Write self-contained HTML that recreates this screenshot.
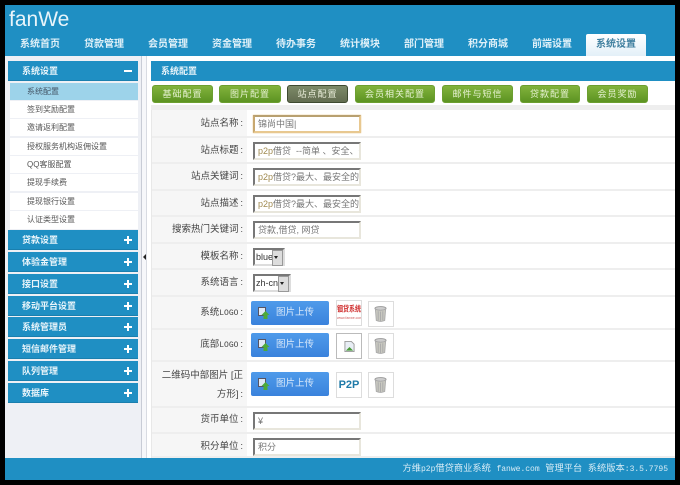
<!DOCTYPE html>
<html><head><meta charset="utf-8">
<style>
html,body{margin:0;padding:0;width:680px;height:485px;overflow:hidden;background:#000;font-family:"Liberation Sans","WenQuanYi Zen Hei","Noto Sans CJK SC",sans-serif}
div,span{position:absolute;box-sizing:border-box;white-space:nowrap}
span.s{position:static}
#p{left:5px;top:5px;width:670px;height:475px;background:#fff;overflow:hidden}
.a{position:absolute}
.tab{top:39px;color:#dff0f8;font-size:10px;font-weight:bold;line-height:12px}
.sh{left:8px;width:130px;height:20px;background:#1f8fc3;color:#e8f4fa;font-size:9px;font-weight:bold;line-height:20px;padding-left:14px;border-bottom:1px solid #1a7fae}
.sh i{position:absolute;left:116px;top:9px;width:8px;height:2px;background:#fff}
.sh i.pl:after{content:"";position:absolute;left:3px;top:-3px;width:2px;height:8px;background:#fff}
.si{left:10px;width:128px;height:18px;background:#fff;color:#555;font-size:8px;line-height:17px;padding-left:17px;border-bottom:1px solid #eef0f5}
.btn{top:85px;height:18px;background:linear-gradient(#82b33c,#5c9322);border:1px solid #6c9f30;border-radius:3px;color:#e6f2d2;font-size:9px;line-height:16px;text-align:center;letter-spacing:1px}
.lb{left:147px;width:96px;text-align:right;color:#444;font-size:9.500px;line-height:26px}
.row{left:152px;width:523px;border-bottom:2px solid #eee;background:#fff}
.row b{position:absolute;left:0;top:0;bottom:0;width:95px;background:#f6f6f6}
.ip{left:253px;width:108px;height:18px;background:#fff;border:2px solid;border-color:#777 #e8e6dc #e8e6dc #777;color:#777;font-size:9px;line-height:14px;padding-left:3px;overflow:hidden}
.up{left:251px;width:78px;height:24px;background:linear-gradient(#4f9bea,#3a82dc);border-radius:2px;color:#d8e8fa;font-size:9.500px;line-height:23px;padding-left:25px}
.th{width:26px;height:26px;border:1px solid #ddd;background:#fff}
.sel{left:253px;height:18px;border:2px solid;border-color:#777 #ddd #ddd #777;background:#fff;font-size:9px;color:#333;line-height:14px;padding-left:1px}
.sel i{position:absolute;right:0;top:0;width:9px;height:14px;background:#ddd;border:1px solid #999}
.sel i:after{content:"";position:absolute;left:1px;top:5px;border:2.500px solid transparent;border-top:3px solid #222}
.l{position:static;font-size:8px;font-family:"Liberation Mono",monospace}
</style></head><body>
<div id="p"></div>
<div class="a" style="left:5px;top:5px;width:670px;height:51px;background:#1f8fc3"></div>
<div class="a" style="left:9px;top:9px;font-size:21px;color:#e8f4fa;line-height:22px;font-family:'Liberation Sans',sans-serif">fanWe</div>

<div class="tab" style="left:20px">系统首页</div>
<div class="tab" style="left:84px">贷款管理</div>
<div class="tab" style="left:148px">会员管理</div>
<div class="tab" style="left:212px">资金管理</div>
<div class="tab" style="left:276px">待办事务</div>
<div class="tab" style="left:340px">统计模块</div>
<div class="tab" style="left:404px">部门管理</div>
<div class="tab" style="left:468px">积分商城</div>
<div class="tab" style="left:532px">前端设置</div>
<div class="a" style="left:586px;top:34px;width:60px;height:22px;background:linear-gradient(#fff,#e3f0f8);border-radius:2px 2px 0 0"></div>
<div class="tab" style="left:596px;color:#3f7f9f">系统设置</div>

<div class="a" style="left:5px;top:56px;width:137px;height:402px;background:#eef0f5"></div>
<div class="a" style="left:141px;top:56px;width:1px;height:402px;background:#c8ccd6"></div>
<div class="a" style="left:142px;top:56px;width:4px;height:402px;background:#f6f7fa"></div>
<div class="a" style="left:146px;top:56px;width:1px;height:402px;background:#d8dbe2"></div>
<div class="a" style="left:143px;top:254px;border:3px solid transparent;border-right:3px solid #222;border-left:0"></div>

<div class="sh" style="top:61px">系统设置<i></i></div>
<div class="si" style="top:83px;background:#9dd3ea;height:18px;color:#456">系统配置</div>
<div class="si" style="top:101px">签到奖励配置</div>
<div class="si" style="top:119px">邀请返利配置</div>
<div class="si" style="top:138px">授权服务机构返佣设置</div>
<div class="si" style="top:156px">QQ客服配置</div>
<div class="si" style="top:174px">提现手续费</div>
<div class="si" style="top:193px">提现银行设置</div>
<div class="si" style="top:211px;height:19px">认证类型设置</div>
<div class="sh" style="top:230px">贷款设置<i class="pl"></i></div>
<div class="sh" style="top:252px">体验金管理<i class="pl"></i></div>
<div class="sh" style="top:274px">接口设置<i class="pl"></i></div>
<div class="sh" style="top:296px">移动平台设置<i class="pl"></i></div>
<div class="sh" style="top:317px">系统管理员<i class="pl"></i></div>
<div class="sh" style="top:339px">短信邮件管理<i class="pl"></i></div>
<div class="sh" style="top:361px">队列管理<i class="pl"></i></div>
<div class="sh" style="top:383px">数据库<i class="pl"></i></div>

<div class="a" style="left:151px;top:61px;width:524px;height:20px;background:#1f8fc3;color:#e8f4fa;font-size:9px;font-weight:bold;line-height:20px;padding-left:10px">系统配置</div>

<div class="btn" style="left:152px;width:61px">基础配置</div>
<div class="btn" style="left:219px;width:62px">图片配置</div>
<div class="btn" style="left:287px;width:61px;background:linear-gradient(#7d8a68,#626c50);border-color:#3e4a30;color:#e8ecd8">站点配置</div>
<div class="btn" style="left:355px;width:80px">会员相关配置</div>
<div class="btn" style="left:442px;width:71px">邮件与短信</div>
<div class="btn" style="left:520px;width:60px">贷款配置</div>
<div class="btn" style="left:587px;width:61px">会员奖励</div>

<div class="a" style="left:151px;top:105px;width:524px;height:5px;background:#eee"></div>
<div class="a" style="left:151px;top:110px;width:1px;height:348px;background:#e8e8e8"></div>
<div class="row" style="top:110px;height:28px"><b></b></div>
<div class="row" style="top:138px;height:26px"><b></b></div>
<div class="row" style="top:164px;height:27px"><b></b></div>
<div class="row" style="top:191px;height:26px"><b></b></div>
<div class="row" style="top:217px;height:27px"><b></b></div>
<div class="row" style="top:244px;height:26px"><b></b></div>
<div class="row" style="top:270px;height:27px"><b></b></div>
<div class="row" style="top:297px;height:33px"><b></b></div>
<div class="row" style="top:330px;height:32px"><b></b></div>
<div class="row" style="top:362px;height:46px"><b></b></div>
<div class="row" style="top:408px;height:26px"><b></b></div>
<div class="row" style="top:434px;height:24px"><b></b></div>

<div class="lb" style="top:111px">站点名称&#8201;:</div>
<div class="lb" style="top:138px">站点标题&#8201;:</div>
<div class="lb" style="top:164px">站点关键词&#8201;:</div>
<div class="lb" style="top:191px">站点描述&#8201;:</div>
<div class="lb" style="top:217px">搜索热门关键词&#8201;:</div>
<div class="lb" style="top:244px">模板名称&#8201;:</div>
<div class="lb" style="top:270px">系统语言&#8201;:</div>
<div class="lb" style="top:300px">系统<span class="l">LOGO</span>&#8201;:</div>
<div class="lb" style="top:332px">底部<span class="l">LOGO</span>&#8201;:</div>
<div class="lb" style="top:366px;line-height:19px">二维码中部图片 [正<br>方形]&#8201;:</div>
<div class="lb" style="top:407px">货币单位&#8201;:</div>
<div class="lb" style="top:434px">积分单位&#8201;:</div>

<div class="ip" style="top:115px;border:2px solid #e8c890;box-shadow:0 0 1px #e0b060;border-top-color:#b8a070;border-left-color:#c8a870">锦尚中国|</div>
<div class="ip" style="top:142px"><span class="s" style="color:#a08a50">p2p</span>借贷 &nbsp;--简单 、安全、付</div>
<div class="ip" style="top:168px"><span class="s" style="color:#a08a50">p2p</span>借贷?最大、最安全的网</div>
<div class="ip" style="top:195px"><span class="s" style="color:#a08a50">p2p</span>借贷?最大、最安全的网</div>
<div class="ip" style="top:221px">贷款,借贷, 网贷</div>
<div class="sel" style="top:248px;width:32px">blue<i></i></div>
<div class="sel" style="top:274px;width:38px">zh-cn<i></i></div>

<div class="up" style="top:301px">图片上传</div>
<div class="up" style="top:333px">图片上传</div>
<div class="up" style="top:372px">图片上传</div>
<svg style="position:absolute;left:258px;top:307px" width="12" height="12" viewBox="0 0 12 12"><path d="M.5.500h7v8h-7z" fill="#dfe9f5" stroke="#556"/><path d="M7.500 4l4 4h-2v4h-4V8h-2z" fill="#4caa3a"/></svg>
<svg style="position:absolute;left:258px;top:339px" width="12" height="12" viewBox="0 0 12 12"><path d="M.5.500h7v8h-7z" fill="#dfe9f5" stroke="#556"/><path d="M7.500 4l4 4h-2v4h-4V8h-2z" fill="#4caa3a"/></svg>
<svg style="position:absolute;left:258px;top:378px" width="12" height="12" viewBox="0 0 12 12"><path d="M.5.500h7v8h-7z" fill="#dfe9f5" stroke="#556"/><path d="M7.500 4l4 4h-2v4h-4V8h-2z" fill="#4caa3a"/></svg>

<div class="th" style="left:336px;top:300px;overflow:hidden"><span style="left:0;top:5px;width:24px;text-align:center;color:#d03030;font-size:6px;font-weight:bold;line-height:8px;transform:scaleY(1.300)">锢贷系统</span><span style="left:0;top:15px;width:24px;text-align:center;color:#d06060;font-size:3.500px;line-height:4px">www.fanwe.com</span></div>
<div class="th" style="left:336px;top:333px;border:1px solid #bbb"></div>
<svg style="position:absolute;left:344px;top:340px" width="11" height="13" viewBox="0 0 12 13"><path d="M1 1h7l3 3v8H1z" fill="#e8eef5" stroke="#999"/><path d="M2 11l4-4 4 4z" fill="#4a9a3a"/></svg>
<div class="th" style="left:336px;top:372px;color:#1f7aa8;font-size:11px;font-weight:bold;text-align:center;line-height:24px">P2P</div>

<div class="th" style="left:368px;top:301px"></div>
<div class="th" style="left:368px;top:333px"></div>
<div class="th" style="left:368px;top:372px"></div>
<svg style="position:absolute;left:374px;top:305px" width="13" height="18" viewBox="0 0 14 18"><ellipse cx="7" cy="3" rx="6" ry="2" fill="#ccc" stroke="#999"/><path d="M1.500 4l1 12q4.500 2 9 0l1-12q-5.500 2-11 0z" fill="#c8c8c0" stroke="#aaa"/><path d="M4.500 6v10M7 6.500v10M9.500 6v10" stroke="#aaa" fill="none"/></svg>
<svg style="position:absolute;left:374px;top:337px" width="13" height="18" viewBox="0 0 14 18"><ellipse cx="7" cy="3" rx="6" ry="2" fill="#ccc" stroke="#999"/><path d="M1.500 4l1 12q4.500 2 9 0l1-12q-5.500 2-11 0z" fill="#c8c8c0" stroke="#aaa"/><path d="M4.500 6v10M7 6.500v10M9.500 6v10" stroke="#aaa" fill="none"/></svg>
<svg style="position:absolute;left:374px;top:376px" width="13" height="18" viewBox="0 0 14 18"><ellipse cx="7" cy="3" rx="6" ry="2" fill="#ccc" stroke="#999"/><path d="M1.500 4l1 12q4.500 2 9 0l1-12q-5.500 2-11 0z" fill="#c8c8c0" stroke="#aaa"/><path d="M4.500 6v10M7 6.500v10M9.500 6v10" stroke="#aaa" fill="none"/></svg>

<div class="ip" style="top:412px">¥</div>
<div class="ip" style="top:438px">积分</div>

<div class="a" style="left:5px;top:458px;width:670px;height:22px;background:#1f8fc3;color:#d8ecf6;font-size:9.250px;line-height:21px;text-align:right;padding-right:7px;font-family:'Liberation Mono','WenQuanYi Zen Hei',monospace">方维<span class="l">p2p</span>借贷商业系统 <span class="l">fanwe.com</span> 管理平台 系统版本<span class="l">:3.5.7795</span></div>
</body></html>
